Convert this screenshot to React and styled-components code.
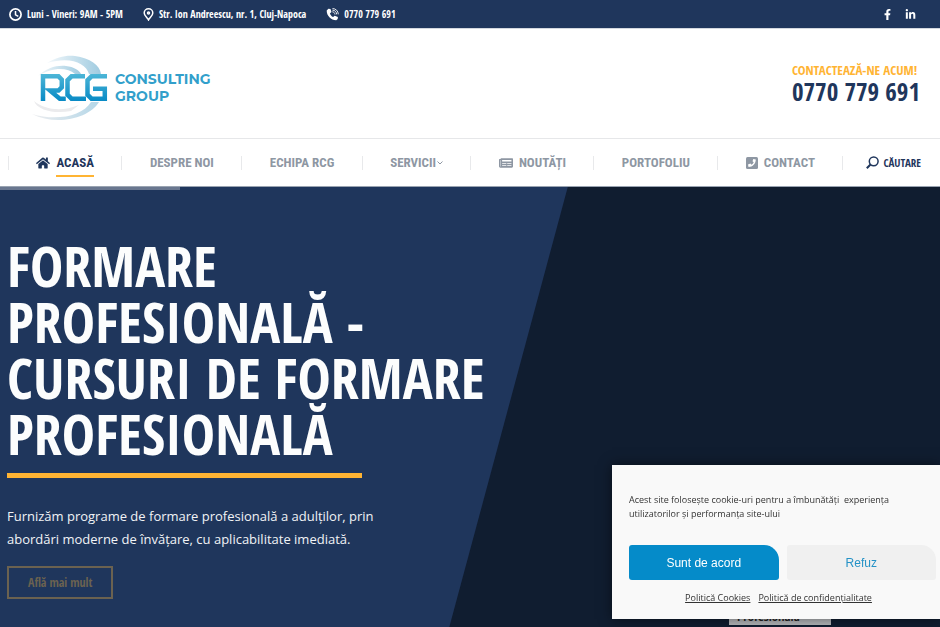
import styled, { createGlobalStyle } from 'styled-components';
import { FaFacebookF, FaLinkedinIn, FaHome, FaNewspaper } from 'react-icons/fa';

const condensed = `'Open Sans Condensed', 'Liberation Sans Narrow', 'Open Sans', sans-serif`
const navFont = `'Roboto Condensed', 'Liberation Sans Narrow', Roboto, sans-serif`

const GlobalStyle = createGlobalStyle`
	* {
		box-sizing: border-box;
	}
	body {
		margin: 0;
		font-family: 'Open Sans', sans-serif;
		background: #101d30;
	}
	a {
		color: inherit;
		text-decoration: none;
	}
	svg {
		display: block;
		flex: none;
	}
	h1, p {
		margin: 0;
	}
`

const Page = styled.div`
	min-height: 100vh;
	display: flex;
	flex-direction: column;
	overflow: hidden;
`

const TopBar = styled.div`
	height: 28px;
	padding: 0 24px 0 9px;
	display: flex;
	align-items: center;
	justify-content: space-between;
	background: #1f365c;
	color: #fff;
	font: bold 10px/16px ${condensed};
`

const TopGroup = styled.div`
	display: flex;
	align-items: center;
	gap: ${({ $gap }) => $gap}px;
`

const TopItem = styled.span`
	display: flex;
	align-items: center;
	gap: 5px;
`

const Header = styled.header`
	height: 111px;
	padding: 0 20px 2px 32px;
	display: flex;
	align-items: center;
	justify-content: space-between;
	background: #fff;
	border-top: 1px solid #d3d8df;
	border-bottom: 1px solid #e6e7e9;
`

const Phone = styled.a`
	display: flex;
	flex-direction: column;
	color: #1f365c;
	font: bold 25px/25px ${condensed};
`

const PhoneLabel = styled.span`
	color: #ffb433;
	font-size: 13px;
	line-height: 18px;
`

const Nav = styled.nav`
	height: 48px;
	padding: 0 19px 0 8px;
	display: flex;
	align-items: center;
	background: #fff;
	border-bottom: 1px solid #99a3b1;
`

const NavItem = styled.a`
	flex: 1 1 auto;
	height: 14px;
	display: flex;
	align-items: center;
	justify-content: center;
	gap: 6px;
	border-left: 1px solid #e8e9eb;
	color: ${({ $active }) => $active ? '#1f365c' : '#8e97a3'};
	font: bold 13px/20px ${navFont};
`

const NavText = styled.span`
	display: flex;
	align-items: center;
	gap: 1px;
	padding: 4px 0 2px;
	border-bottom: 2px solid ${({ $active }) => $active ? '#ffb433' : 'transparent'};
`

const Search = styled.button`
	height: 14px;
	padding: 0 0 0 23px;
	display: flex;
	align-items: center;
	gap: 4px;
	border: 0;
	border-left: 1px solid #e8e9eb;
	background: none;
	color: #1f365c;
	font: bold 11px/16px ${condensed};
`

const Hero = styled.main`
	flex: 1;
	position: relative;
	padding: 0 7px 28px;
	background: #101d30;
	color: #fff;
	&::before {
		content: '';
		position: absolute;
		inset: 0;
		background: #1f365c;
		clip-path: polygon(0 0, 60.4% 0, 47.8% 100%, 0 100%);
	}
`

const Progress = styled.div`
	position: absolute;
	top: 0;
	left: 0;
	width: 19.1%;
	height: 3px;
	background: #69778f;
`

const HeroContent = styled.div`
	position: relative;
	padding-top: 50px;
`

const Title = styled.h1`
	max-width: 500px;
	color: #fcfdfd;
	font: bold 56px/56px ${condensed};
`

const Rule = styled.div`
	max-width: 355px;
	height: 5px;
	margin: 12px 0 27px;
	background: #ffb433;
`

const Lead = styled.p`
	max-width: 380px;
	color: #f1f3f6;
	font-size: 13px;
	font-weight: 500;
	line-height: 23px;
`

const MoreLink = styled.a`
	display: inline-block;
	margin-top: 15px;
	padding: 6px 19px;
	border: 2px solid #6b6250;
	color: #6b6250;
	font: bold 12px/17px ${condensed};
`

const Caption = styled.div`
	position: absolute;
	right: 109px;
	bottom: 2px;
	width: 102px;
	padding: 0 8px 1px;
	background: #b5b7ba;
	color: #222;
	font: bold 10px/14px 'Open Sans', sans-serif;
`

const Cookie = styled.section`
	position: fixed;
	right: 0;
	bottom: 8px;
	width: 328px;
	padding: 28px 4px 14px 17px;
	background: #f9f9f9;
	color: #333;
	font-size: 9px;
	font-weight: 500;
	line-height: 14px;
	box-shadow: 0 0 12px rgba(0, 0, 0, 0.5);
`

const CookieText = styled.p`
	max-width: 290px;
	white-space: pre-wrap;
`

const CookieButtons = styled.div`
	display: flex;
	gap: 8px;
	margin: 24px 0 11px;
`

const CookieButton = styled.button`
	flex: 1;
	height: 35px;
	border: 0;
	border-radius: 3px 15px 3px 3px;
	background: ${({ $primary }) => $primary ? '#058bc9' : '#f0f0f0'};
	color: ${({ $primary }) => $primary ? '#fff' : '#2592c6'};
	font: 12px 'Liberation Sans', sans-serif;
`

const CookieLinks = styled.div`
	display: flex;
	justify-content: center;
	gap: 8px;
	padding-right: 8px;
	a {
		text-decoration: underline;
	}
`

const ClockIcon = () => (
	<svg width="13" height="13" viewBox="0 0 13 13" fill="none" stroke="currentColor">
		<circle cx="6.5" cy="6.5" r="5.6" strokeWidth="1.7" />
		<path d="M6.5 3v3.8l2.8 1.5" strokeWidth="1.5" />
	</svg>
)

const PinIcon = () => (
	<svg width="11" height="13" viewBox="0 0 11 13" fill="none" stroke="currentColor" strokeWidth="1.5">
		<path d="M5.5 12C4.3 9.7 1.2 7.7 1.2 4.9a4.3 4.1 0 0 1 8.6 0c0 2.8-3.1 4.8-4.3 7.1z" />
		<circle cx="5.5" cy="4.9" r="1" />
	</svg>
)

const CallIcon = () => (
	<svg width="13" height="13" viewBox="0 0 13 13">
		<path fill="currentColor" d="M2.4.8 4.5.9l1 3.1-1.6 1.4c.5 1.5 1.6 2.8 3.2 3.7l1.6-1.4 3.2 1.4-.2 2-1.5 1.2C5 12.3.5 7.5.7 2.5z" />
		<path d="M6.3 3.8c1.5.1 2.6 1.2 2.7 2.7M6.4 2.1c2.5.1 4.2 1.9 4.3 4.3M6.5.5c3.3.1 5.7 2.5 5.8 5.8" fill="none" stroke="currentColor" strokeWidth=".9" />
	</svg>
)

const SearchIcon = () => (
	<svg width="13" height="13" viewBox="0 0 13 13" fill="none" stroke="currentColor">
		<circle cx="7.7" cy="5.3" r="4.4" strokeWidth="1.5" />
		<path d="M4.5 8.5.8 12.2" strokeWidth="2" />
	</svg>
)

const ChevronIcon = () => (
	<svg width="6" height="4" viewBox="0 0 6 4" fill="none" stroke="currentColor">
		<path d="m.5.5 2.5 2.5L5.5.5" />
	</svg>
)

const PhoneSquareIcon = () => (
	<svg width="12" height="12" viewBox="0 0 12 12">
		<rect width="12" height="12" rx="1.5" fill="currentColor" />
		<path d="m7.3 2 2.5.4C9.7 6.7 6.7 9.8 2.5 9.9L2 7.5l2.400-1 1 1.2C6.5 7.1 7.2 6.4 7.700 5.3l-1.2-1z" fill="#fff" />
	</svg>
)

const Logo = () => (
	<svg width="184" height="78" viewBox="0 -10 184 78" role="img" aria-label="RCG Consulting Group">
		<defs>
			<linearGradient id="brand" gradientUnits="userSpaceOnUse" x1="0" y1="20" x2="0" y2="47">
				<stop offset="0" stopColor="#4db6d7" />
				<stop offset="1" stopColor="#088ac5" />
			</linearGradient>
			<linearGradient id="arcTop">
				<stop offset="0" stopColor="#f3f8fb" />
				<stop offset="1" stopColor="#9fcbe0" />
			</linearGradient>
			<linearGradient id="arcLow">
				<stop offset="0" stopColor="#ededef" />
				<stop offset="1" stopColor="#b5d7e8" />
			</linearGradient>
		</defs>
		<path fill="url(#arcTop)" d="M15 9C25 3 34 1 43 2c15 2 25 9 26 18H57C54 9 38 2 15 9z" />
		<path fill="url(#arcTop)" d="M6 22C14 14 25 11 34 12c8 1 13 4 15 8h-6C35 13 20 13 6 22z" />
		<path fill="url(#arcLow)" d="M0 60c23 7 50 3 59-12h8C57 65 23 72 0 60z" />
		<path fill="#ebebed" d="M2 47c11 9 28 11 45 4l-8 6C24 60 6 57 2 47z" />
		<g fill="none" stroke="url(#brand)" strokeWidth="4.5">
			<path d="M11 47V22.3h15.5l3.3 3.3v7.6l-3.3 3.3H18l9.8 8.2h6" />
			<path d="M53 22.3H39.5l-4 4v14.4l4 4H54" />
			<path d="M75 22.3H59.5l-4 4v14.4l4 4h13.3V34.8H61" />
		</g>
		<g fill="#329fcb" fontFamily="Montserrat, Inter, sans-serif" fontWeight="700" fontSize="14">
			<text x="83" y="30">CONSULTING</text>
			<text x="83" y="47">GROUP</text>
		</g>
	</svg>
)

const navItems = [
	{ label: 'ACASĂ', icon: <FaHome size={14} />, active: true },
	{ label: 'DESPRE NOI' },
	{ label: 'ECHIPA RCG' },
	{ label: 'SERVICII', submenu: true },
	{ label: 'NOUTĂȚI', icon: <FaNewspaper size={14} /> },
	{ label: 'PORTOFOLIU' },
	{ label: 'CONTACT', icon: <PhoneSquareIcon /> },
]

const App = () => {
	return (
		<Page>
			<GlobalStyle />
			<TopBar>
				<TopGroup $gap={20}>
					<TopItem><ClockIcon />Luni - Vineri: 9AM - 5PM</TopItem>
					<TopItem><PinIcon />Str. Ion Andreescu, nr. 1, Cluj-Napoca</TopItem>
					<TopItem><CallIcon />0770 779 691</TopItem>
				</TopGroup>
				<TopGroup $gap={12}>
					<a href="#facebook" aria-label="Facebook"><FaFacebookF size={11} /></a>
					<a href="#linkedin" aria-label="LinkedIn"><FaLinkedinIn size={11} /></a>
				</TopGroup>
			</TopBar>
			<Header>
				<a href="#home"><Logo /></a>
				<Phone href="tel:0770779691">
					<PhoneLabel>CONTACTEAZĂ-NE ACUM!</PhoneLabel>
					<span>0770 779 691</span>
				</Phone>
			</Header>
			<Nav>
				{
					navItems.map(el => {
						return (
							<NavItem key={el.label} href="#" $active={el.active}>
								{el.icon}
								<NavText $active={el.active}>{el.label}{el.submenu && <ChevronIcon />}</NavText>
							</NavItem>
						)
					})
				}
				<Search type="button"><SearchIcon />CĂUTARE</Search>
			</Nav>
			<Hero>
				<Progress />
				<HeroContent>
					<Title>FORMARE PROFESIONALĂ - CURSURI DE FORMARE PROFESIONALĂ</Title>
					<Rule />
					<Lead>Furnizăm programe de formare profesională a adulților, prin abordări moderne de învățare, cu aplicabilitate imediată.</Lead>
					<MoreLink href="#more">Află mai mult</MoreLink>
				</HeroContent>
				<Caption>Profesională</Caption>
			</Hero>
			<Cookie aria-label="Cookie-uri">
				<CookieText>{'Acest site folosește cookie-uri pentru a îmbunătăți  experiența utilizatorilor și performanța site-ului'}</CookieText>
				<CookieButtons>
					<CookieButton type="button" $primary>Sunt de acord</CookieButton>
					<CookieButton type="button">Refuz</CookieButton>
				</CookieButtons>
				<CookieLinks>
					<a href="#cookies">Politică Cookies</a>
					<a href="#privacy">Politică de confidențialitate</a>
				</CookieLinks>
			</Cookie>
		</Page>
	)
}

export default App;
